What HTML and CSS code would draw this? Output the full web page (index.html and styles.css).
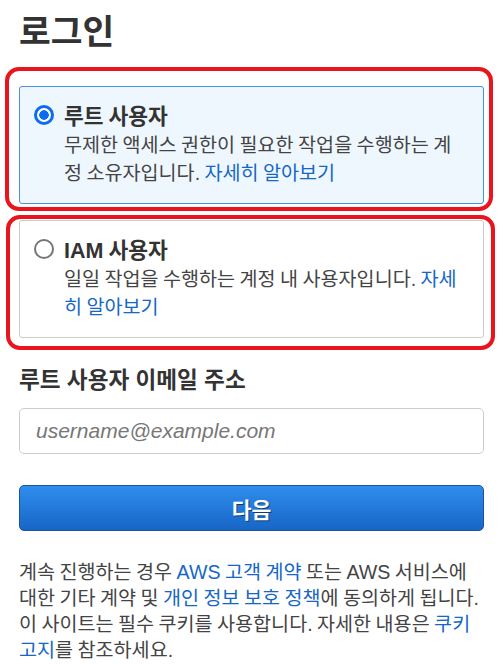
FILE: index.html
```html
<!DOCTYPE html>
<html lang="ko">
<head>
    <meta charset="UTF-8">
    <meta name="viewport" content="width=device-width, initial-scale=1.0">
    <title>로그인</title>
    <link rel="stylesheet" href="styles.css">
</head>
<body>
    <div class="container">
        <h1>로그인</h1>

        <!-- Tipo de usuario -->
        <label class="user-type selected">
            <span class="mark mark-first"></span>
            <span class="type-title">
                <input type="radio" name="userType" checked>
                루트 사용자
            </span>
            <span class="type-desc">무제한 액세스 권한이 필요한 작업을 수행하는 계정 소유자입니다. <a href="#">자세히 알아보기</a></span>
        </label>

        <label class="user-type">
            <span class="mark mark-second"></span>
            <span class="type-title">
                <input type="radio" name="userType">
                IAM 사용자
            </span>
            <span class="type-desc">일일 작업을 수행하는 계정 내 사용자입니다. <a href="#">자세히 알아보기</a></span>
        </label>

        <div class="form-group">
            <label for="email">루트 사용자 이메일 주소</label>
            <input type="email" id="email" placeholder="username@example.com">
        </div>

        <button class="next-btn">다음</button>

        <p class="legal">
            계속 진행하는 경우 <a href="#">AWS 고객 계약</a> 또는 AWS 서비스에 대한 기타 계약 및 <a href="#">개인 정보 보호 정책</a>에 동의하게 됩니다. 이 사이트는 필수 쿠키를 사용합니다. 자세한 내용은 <a href="#">쿠키 고지</a>를 참조하세요.
        </p>
    </div>
</body>
</html>
```

FILE: styles.css
```css
body {
    font-family: "Liberation Sans", "Noto Sans CJK KR", sans-serif;
    background-color: #fff;
    color: #444;
    margin: 0;
    padding: 0;
}

.container {
    width: 465px;
    padding: 12px 0 0 19px;
}

h1 {
    margin: 0 0 34px;
    font-size: 34.5px;
    line-height: 40px;
    font-weight: bold;
    color: #333;
}

a {
    color: #1668c4;
    text-decoration: none;
}

.user-type {
    position: relative;
    display: block;
    padding: 16px 18px 16px 44px;
    border: 1px solid #ccc;
    border-radius: 3px;
    background-color: #fff;
    margin-bottom: 16px;
}

.user-type.selected {
    border-color: #4a8fdc;
    background-color: #eff7fe;
}

/* Marcas rojas encima de las tarjetas */
.mark {
    position: absolute;
    border: 4px solid #e8141e;
    border-radius: 14px;
    pointer-events: none;
}

.mark-first {
    top: -20px;
    bottom: -8px;
    left: -15px;
    right: -10px;
}

.mark-second {
    top: -6px;
    bottom: -13px;
    left: -14px;
    right: -12px;
}

.type-title {
    position: relative;
    display: block;
    font-size: 21.5px;
    line-height: 28px;
    font-weight: bold;
    color: #333;
    word-spacing: -1px;
}

.type-title input {
    position: absolute;
    left: -30px;
    top: 2px;
    margin: 0;
    width: 20px;
    height: 20px;
    appearance: none;
    -webkit-appearance: none;
    box-sizing: border-box;
    border: 2px solid #767676;
    border-radius: 50%;
    background-color: #fff;
}

.type-title input:checked {
    border: 3px solid #0b6cf2;
    background: radial-gradient(circle, #0b6cf2 0 4.5px, #fff 5px);
}

.type-desc {
    display: block;
    font-size: 19.6px;
    line-height: 28px;
    word-spacing: -1px;
    color: #444;
}

.form-group {
    margin-top: 29px;
}

.form-group label {
    display: block;
    font-size: 22.6px;
    line-height: 28px;
    font-weight: bold;
    color: #333;
    margin-bottom: 13px;
}

.form-group input {
    display: block;
    width: 100%;
    height: 46px;
    box-sizing: border-box;
    padding: 0 16px;
    border: 1px solid #ccc;
    border-radius: 5px;
    font-family: inherit;
    font-size: 21px;
}

.form-group input::placeholder {
    color: #777;
    font-style: italic;
}

.next-btn {
    display: block;
    width: 100%;
    height: 46px;
    margin-top: 31px;
    border: 1px solid #1a559c;
    border-radius: 5px;
    background: linear-gradient(#2f8ded, #1766c6);
    color: #fff;
    font-family: inherit;
    font-size: 21.5px;
    font-weight: bold;
    text-shadow: 1px 1px 0 #0c3a72;
    cursor: pointer;
}

.legal {
    margin: 28px 0 0;
    font-size: 19.6px;
    line-height: 26px;
    word-spacing: -1px;
    color: #444;
}
```
